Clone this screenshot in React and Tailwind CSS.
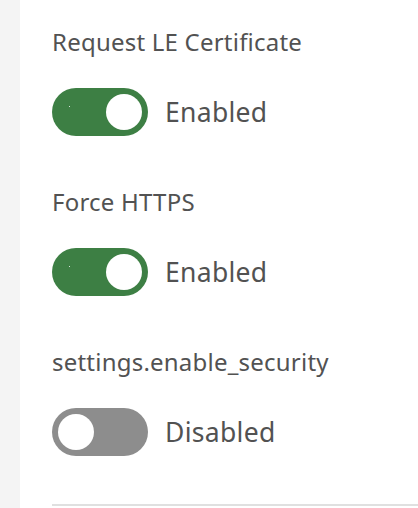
const settings = [
  { label: "Request LE Certificate", on: true },
  { label: "Force HTTPS", on: true },
  { label: "settings.enable_security", on: false },
];

function Toggle({ on }) {
  return (
    <div
      className={`relative w-[96px] h-[48px] rounded-full shrink-0 flex items-center px-[6px] ${
        on ? "bg-[#3d7f44] justify-end" : "bg-[#8d8d8d] justify-start"
      }`}
    >
      {on && <span className="absolute left-[17px] top-[18px] w-[1px] h-[1px] bg-white/80" />}
      <span className="w-[36px] h-[36px] rounded-full bg-white" />
    </div>
  );
}

export default function App() {
  return (
    <div
      className="flex w-[418px] h-[508px] bg-white overflow-hidden"
      style={{ fontFamily: '"Noto Sans", "Open Sans", sans-serif' }}
    >
      <div className="w-[20px] bg-[#f4f4f4] shrink-0" />
      <div className="flex-1 pl-[32px] pt-[26px] flex flex-col">
        {settings.map((s, i) => (
          <div key={s.label} className={i > 0 ? "mt-[50px]" : ""}>
            <p className="text-[24px] leading-[32px] tracking-[0.22px] text-[#525252] whitespace-nowrap">
              {s.label}
            </p>
            <div className="mt-[30px] flex items-center gap-[17px]">
              <Toggle on={s.on} />
              <span className="text-[26.5px] leading-[36px] tracking-[0.3px] text-[#525252]">
                {s.on ? "Enabled" : "Disabled"}
              </span>
            </div>
          </div>
        ))}
        <div className="mt-[48px] h-[2px] bg-[#e0e0e0]" />
      </div>
    </div>
  );
}
